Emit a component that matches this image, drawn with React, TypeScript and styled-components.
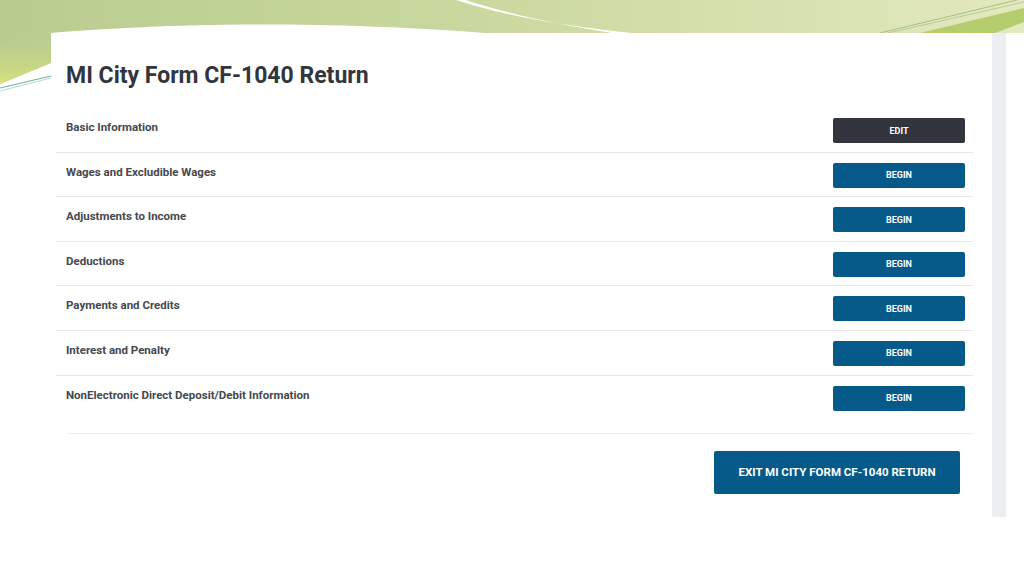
import React from 'react'
import styled, { createGlobalStyle } from 'styled-components'

const GlobalStyle = createGlobalStyle`
  html, body {
    margin: 0;
    padding: 0;
    background: #ffffff;
    font-family: Roboto, "Liberation Sans", Arial, sans-serif;
  }
`

const Slide = styled.div`
  position: relative;
  width: 1024px;
  height: 576px;
  overflow: hidden;
  background: #ffffff;
`

const Decoration = styled.svg`
  position: absolute;
  top: 0;
  left: 0;
  z-index: 0;
`

const Frame = styled.div`
  position: relative;
  z-index: 1;
  display: flex;
  align-items: flex-start;
  padding: 33px 0 0 51px;
`

const Panel = styled.div`
  width: 941px;
  height: 484px;
  box-sizing: border-box;
  background: #ffffff;
  padding: 29px 19px 0 5px;
`

const Scrollbar = styled.div`
  width: 14px;
  height: 484px;
  background: #eceef2;
`

const Title = styled.h1`
  margin: 0 0 18px 10px;
  font-size: 23px;
  line-height: 28px;
  font-weight: 700;
  color: #32353d;
`

const Row = styled.div<{ $tall?: boolean }>`
  display: flex;
  justify-content: space-between;
  align-items: flex-start;
  box-sizing: border-box;
  height: ${(p) => (p.$tall ? '57px' : '44.6px')};
  padding: 10px 8px 0 10px;
  border-bottom: ${(p) => (p.$tall ? 'none' : '1px solid #e8e8e8')};
`

const Label = styled.span`
  margin-top: 2px;
  font-size: 11.5px;
  line-height: 15px;
  font-weight: 700;
  color: #45484e;
`

const StepButton = styled.button<{ $dark?: boolean }>`
  width: 132px;
  height: 25px;
  border: none;
  border-radius: 2px;
  background: ${(p) => (p.$dark ? '#32353d' : '#055a8a')};
  color: #ffffff;
  font-family: inherit;
  font-size: 9px;
  font-weight: 700;
  cursor: pointer;
`

const Divider = styled.div`
  margin-left: 12px;
  border-top: 1px solid #ececec;
`

const Footer = styled.div`
  display: flex;
  justify-content: flex-end;
  padding: 17px 13px 0 0;
`

const ExitButton = styled.button`
  width: 246px;
  height: 43px;
  border: none;
  border-radius: 2px;
  background: #055a8a;
  color: #ffffff;
  font-family: inherit;
  font-size: 11.5px;
  font-weight: 700;
  cursor: pointer;
`

const steps = [
  { label: 'Basic Information', action: 'EDIT' },
  { label: 'Wages and Excludible Wages', action: 'BEGIN' },
  { label: 'Adjustments to Income', action: 'BEGIN' },
  { label: 'Deductions', action: 'BEGIN' },
  { label: 'Payments and Credits', action: 'BEGIN' },
  { label: 'Interest and Penalty', action: 'BEGIN' },
  { label: 'NonElectronic Direct Deposit/Debit Information', action: 'BEGIN' },
]

const TopArt = () => (
  <Decoration width="1024" height="100" viewBox="0 0 1024 100">
    <defs>
      <linearGradient id="band" x1="0" y1="0" x2="1" y2="0">
        <stop offset="0" stopColor="#b9cc8e" />
        <stop offset="0.45" stopColor="#c9d89e" />
        <stop offset="1" stopColor="#e2e9be" />
      </linearGradient>
      <linearGradient id="leftFade" x1="0" y1="0" x2="0" y2="1">
        <stop offset="0" stopColor="#bccd8c" stopOpacity="0" />
        <stop offset="1" stopColor="#d6e37a" />
      </linearGradient>
    </defs>
    <path d="M0,0 H1024 V33 H51 V63 L0,84 Z" fill="url(#band)" />
    <path d="M0,30 H51 V63 L0,84 Z" fill="url(#leftFade)" />
    <path d="M51,33 C150,25 300,19 485,33 Z" fill="#ffffff" />
    <path d="M456,0 C505,16 565,26 632,33 L612,33 C548,23 498,11 466,0 Z" fill="#ffffff" />
    <path d="M1024,8 L1024,22 L995,33 L920,33 Z" fill="#b5cd6e" />
    <line x1="1017" y1="0" x2="880" y2="33" stroke="#8fae70" strokeWidth="0.7" />
    <line x1="1024" y1="2" x2="888" y2="33" stroke="#9fbb80" strokeWidth="0.6" />
    <line x1="0" y1="88" x2="51" y2="76" stroke="#3f9a86" strokeWidth="0.8" />
    <line x1="0" y1="91" x2="51" y2="78" stroke="#7ab0a2" strokeWidth="0.5" />
  </Decoration>
)

const App: React.FC = () => {
  return (
    <Slide>
      <GlobalStyle />
      <TopArt />
      <Frame>
        <Panel>
          <Title>MI City Form CF-1040 Return</Title>
          {steps.map((step, i) => (
            <Row key={step.label} $tall={i === steps.length - 1}>
              <Label>{step.label}</Label>
              <StepButton type="button" $dark={step.action === 'EDIT'}>
                {step.action}
              </StepButton>
            </Row>
          ))}
          <Divider />
          <Footer>
            <ExitButton type="button">EXIT MI CITY FORM CF-1040 RETURN</ExitButton>
          </Footer>
        </Panel>
        <Scrollbar />
      </Frame>
    </Slide>
  )
}

export default App
